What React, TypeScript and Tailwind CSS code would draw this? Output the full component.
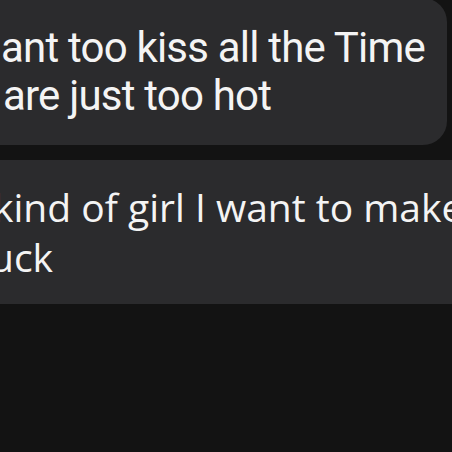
const bubbles = [
  {
    lines: ["ant too kiss all the Time", "are just too hot"],
  },
];

export default function App() {
  return (
    <div className="h-[452px] w-[452px] overflow-hidden bg-[#131313]">
      <div className="-mt-[2px] flex flex-col gap-[15px]">
        {/* first message, right edge visible */}
        <div className="mr-[5px] -ml-[24px] rounded-[24px] bg-[#2b2b2d] pb-[25px] pl-[25px] pt-[26px] font-['Roboto',sans-serif] text-[42px] leading-[48px] tracking-[-0.8px] text-[#f4f4f4]">
          {bubbles[0].lines.map((line, i) => (
            <p key={line} className={i === 1 ? "pl-[2px] whitespace-nowrap" : "whitespace-nowrap"}>
              {line}
            </p>
          ))}
        </div>

        {/* second message, runs past both edges */}
        <div className="-mr-[24px] -ml-[24px] rounded-[24px] bg-[#2b2b2d] py-[22px] pl-[17px] font-['Open_Sans',sans-serif] text-[39px] leading-[50px] text-[#f4f4f4]">
          <p className="whitespace-nowrap">kind of girl I want to make</p>
          <p className="-ml-[3px] whitespace-nowrap">uck</p>
        </div>
      </div>
    </div>
  );
}
